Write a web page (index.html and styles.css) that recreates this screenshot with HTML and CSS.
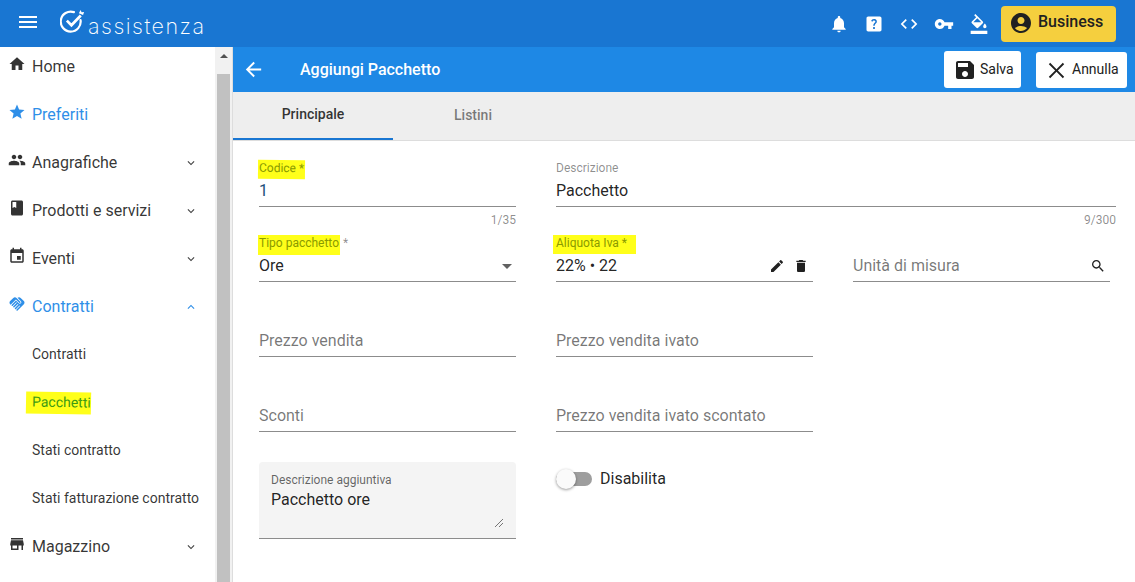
FILE: index.html
```html
<!DOCTYPE html>
<html lang="it">
<head>
<meta charset="utf-8">
<title>Aggiungi Pacchetto</title>
<link rel="stylesheet" href="styles.css">
</head>
<body>
<svg class="sprite" aria-hidden="true">
  <symbol id="i-down" viewBox="0 0 24 24"><path d="M7.41 8.59L12 13.17l4.59-4.58L18 10l-6 6-6-6z"/></symbol>
  <symbol id="i-up" viewBox="0 0 24 24"><path d="M7.41 15.41L12 10.83l4.59 4.58L18 14l-6-6-6 6z"/></symbol>
</svg>
<header class="topbar">
  <button class="menu-btn" aria-label="Menu"><span></span><span></span><span></span></button>
  <div class="logo">
    <svg class="logo-mark" viewBox="0 0 26 24"><path d="M19.8 10.6A9.6 9.6 0 1 1 13.4 3" fill="none" stroke="#fff" stroke-width="2.1" stroke-linecap="round"/><path d="M6.6 11.2l4.4 4.4L20 6.2" fill="none" stroke="#fff" stroke-width="2.6"/><path d="M18.2 4l1.6-3 1 2.2 2.4-.4-1 3z" fill="#fff"/></svg>
    <span class="logo-text">assistenza</span>
  </div>
  <div class="top-actions">
    <svg class="top-icon" viewBox="0 0 24 24"><path d="M12 22c1.1 0 2-.9 2-2h-4c0 1.1.89 2 2 2zm6-6v-5c0-3.07-1.64-5.64-4.5-6.32V4c0-.83-.67-1.5-1.5-1.5s-1.5.67-1.5 1.5v.68C7.63 5.36 6 7.92 6 11v5l-2 2v1h16v-1l-2-2z"/></svg>
    <svg class="top-icon" viewBox="0 0 24 24"><path d="M19 3H5c-1.1 0-2 .9-2 2v14c0 1.1.9 2 2 2h14c1.1 0 2-.9 2-2V5c0-1.1-.9-2-2-2zm-6.99 15c-.7 0-1.26-.56-1.26-1.26 0-.71.56-1.25 1.26-1.25.71 0 1.25.54 1.25 1.25-.01.69-.54 1.26-1.25 1.26zm3.01-7.4c-.76 1.11-1.48 1.46-1.87 2.17-.16.29-.22.48-.22 1.41h-1.82c0-.49-.08-1.29.31-1.98.49-.87 1.42-1.39 1.96-2.16.57-.81.25-2.33-1.37-2.33-1.06 0-1.58.8-1.8 1.48l-1.65-.7C9.01 7.15 10.22 6 11.99 6c1.48 0 2.49.67 3.01 1.52.44.72.7 2.07.03 3.08z"/></svg>
    <svg class="top-icon" viewBox="0 0 24 24"><path d="M9.4 16.6L4.8 12l4.6-4.6L8 6l-6 6 6 6 1.4-1.4zm5.2 0l4.6-4.6-4.6-4.6L16 6l6 6-6 6-1.4-1.4z"/></svg>
    <svg class="top-icon" viewBox="0 0 24 24"><path d="M12.65 10C11.83 7.67 9.61 6 7 6c-3.31 0-6 2.69-6 6s2.69 6 6 6c2.61 0 4.83-1.67 5.65-4H17v4h4v-4h2v-4H12.65zM7 14c-1.1 0-2-.9-2-2s.9-2 2-2 2 .9 2 2-.9 2-2 2z"/></svg>
    <svg class="top-icon" viewBox="0 0 24 24"><path d="M16.56 8.94L7.62 0 6.21 1.41l2.38 2.38-5.15 5.15c-.59.59-.59 1.54 0 2.12l5.5 5.5c.29.29.68.44 1.06.44s.77-.15 1.06-.44l5.5-5.5c.59-.58.59-1.53 0-2.12zM5.21 10L10 5.21 14.79 10H5.21zM19 11.5s-2 2.17-2 3.5c0 1.1.9 2 2 2s2-.9 2-2c0-1.33-2-3.5-2-3.5zM2 20h20v4H2v-4z"/></svg>
    <button class="business">
      <svg class="business-icon" viewBox="0 0 24 24"><path d="M12 2C6.48 2 2 6.48 2 12s4.48 10 10 10 10-4.48 10-10S17.52 2 12 2zm0 4c1.93 0 3.5 1.57 3.5 3.5S13.93 13 12 13s-3.5-1.57-3.5-3.5S10.07 6 12 6zm0 14c-2.03 0-4.43-.82-6.14-2.88C7.55 15.8 9.68 15 12 15s4.45.8 6.14 2.12C16.43 19.18 14.03 20 12 20z"/></svg>
      Business
    </button>
  </div>
</header>
<div class="shell">
  <aside class="sidebar">
    <nav class="nav">
      <a class="nav-row"><svg class="nav-icon" viewBox="0 0 24 24"><path d="M10 20v-6h4v6h5v-8h3L12 3 2 12h3v8z"/></svg>Home</a>
      <a class="nav-row is-active"><svg class="nav-icon" viewBox="0 0 24 24"><path d="M12 17.27L18.18 21l-1.64-7.03L22 9.24l-7.19-.61L12 2 9.19 8.63 2 9.24l5.46 4.73L5.82 21z"/></svg>Preferiti</a>
      <a class="nav-row"><svg class="nav-icon" viewBox="0 0 24 24"><path d="M16 11c1.66 0 2.99-1.34 2.99-3S17.66 5 16 5c-1.66 0-3 1.34-3 3s1.34 3 3 3zm-8 0c1.66 0 2.99-1.34 2.99-3S9.66 5 8 5C6.34 5 5 6.34 5 8s1.34 3 3 3zm0 2c-2.33 0-7 1.17-7 3.5V19h14v-2.5c0-2.33-4.67-3.5-7-3.5zm8 0c-.29 0-.62.02-.97.05 1.16.84 1.97 1.97 1.97 3.45V19h6v-2.5c0-2.33-4.67-3.5-7-3.5z"/></svg>Anagrafiche<svg class="chev"><use href="#i-down"/></svg></a>
      <a class="nav-row"><svg class="nav-icon" viewBox="0 0 24 24"><path d="M18 2H6c-1.1 0-2 .9-2 2v16c0 1.1.9 2 2 2h12c1.1 0 2-.9 2-2V4c0-1.1-.9-2-2-2zM6 4h5v8l-2.5-1.5L6 12V4z"/></svg>Prodotti e servizi<svg class="chev"><use href="#i-down"/></svg></a>
      <a class="nav-row"><svg class="nav-icon" viewBox="0 0 24 24"><path d="M17 12h-5v5h5v-5zM16 1v2H8V1H6v2H5c-1.11 0-1.99.9-1.99 2L3 19c0 1.1.89 2 2 2h14c1.1 0 2-.9 2-2V5c0-1.1-.9-2-2-2h-1V1h-2zm3 18H5V8h14v11z"/></svg>Eventi<svg class="chev"><use href="#i-down"/></svg></a>
      <a class="nav-row is-active"><svg class="nav-icon" viewBox="0 0 24 24"><path d="M16.48 10.41c-.39.39-1.04.39-1.43 0l-4.47-4.46-7.05 7.04-.66-.63c-1.17-1.17-1.17-3.07 0-4.24l4.24-4.24c1.17-1.17 3.07-1.17 4.24 0L16.48 9c.39.39.39 1.02 0 1.41zm.7-2.12c.78.78.78 2.05 0 2.83-1.27 1.27-2.61.22-2.83 0l-3.76-3.76-5.57 5.57c-.39.39-.39 1.02 0 1.41.39.39 1.02.39 1.42 0l4.62-4.62.71.71-4.62 4.62c-.39.39-.39 1.02 0 1.41.39.39 1.02.39 1.42 0l4.62-4.62.71.71-4.62 4.62c-.39.39-.39 1.02 0 1.41.39.39 1.02.39 1.41 0l4.62-4.62.71.71-4.62 4.62c-.39.39-.39 1.02 0 1.41.39.39 1.02.39 1.41 0l8.32-8.34c1.17-1.17 1.17-3.07 0-4.24l-4.24-4.24c-1.15-1.15-3.01-1.17-4.18-.06l4.48 4.47z"/></svg>Contratti<svg class="chev"><use href="#i-up"/></svg></a>
      <a class="nav-row nav-sub">Contratti</a>
      <a class="nav-row nav-sub"><span class="marker marker-nav">Pacchetti</span></a>
      <a class="nav-row nav-sub">Stati contratto</a>
      <a class="nav-row nav-sub">Stati fatturazione contratto</a>
      <a class="nav-row"><svg class="nav-icon" viewBox="0 0 24 24"><path d="M20 4H4v2h16V4zm1 10v-2l-1-5H4l-1 5v2h1v6h10v-6h4v6h2v-6h1zm-9 4H6v-4h6v4z"/></svg>Magazzino<svg class="chev"><use href="#i-down"/></svg></a>
    </nav>
    <div class="scrollbar"><span class="scroll-arrow"></span><span class="scroll-thumb"></span></div>
  </aside>
  <main class="content">
    <div class="toolbar">
      <svg class="back" viewBox="0 0 24 24"><path d="M20 11H7.83l5.59-5.59L12 4l-8 8 8 8 1.41-1.41L7.83 13H20v-2z"/></svg>
      <h1 class="title">Aggiungi Pacchetto</h1>
      <button class="tool-btn btn-save"><svg class="tool-icon" viewBox="0 0 24 24"><path d="M17 3H5c-1.11 0-2 .9-2 2v14c0 1.1.89 2 2 2h14c1.1 0 2-.9 2-2V7l-4-4zm-5 16c-1.66 0-3-1.34-3-3s1.34-3 3-3 3 1.34 3 3-1.34 3-3 3zm3-10H5V5h10v4z"/></svg>Salva</button>
      <button class="tool-btn btn-cancel"><svg class="tool-icon" viewBox="0 0 24 24"><path d="M20 5.4L18.6 4 12 10.6 5.4 4 4 5.4 10.6 12 4 18.6 5.4 20 12 13.4 18.6 20 20 18.6 13.4 12z"/></svg>Annulla</button>
    </div>
    <div class="tabs">
      <div class="tab tab-on">Principale</div>
      <div class="tab">Listini</div>
    </div>
    <form class="form">
      <div class="row">
        <div class="field">
          <div class="label"><span class="marker marker-a">Codice *</span></div>
          <div class="value value-blue">1</div>
          <div class="counter">1/35</div>
        </div>
        <div class="field field-wide">
          <div class="label">Descrizione</div>
          <div class="value">Pacchetto</div>
          <div class="counter">9/300</div>
        </div>
      </div>
      <div class="row">
        <div class="field">
          <div class="label"><span class="marker marker-b">Tipo pacchetto</span> *</div>
          <div class="value">Ore<span class="caret"></span></div>
        </div>
        <div class="field">
          <div class="label"><span class="marker marker-c">Aliquota Iva *</span></div>
          <div class="value">22% • 22
            <span class="value-icons">
              <svg class="mini" viewBox="0 0 24 24"><path d="M3 17.25V21h3.75L17.81 9.94l-3.75-3.75L3 17.25zM20.71 7.04c.39-.39.39-1.02 0-1.41l-2.34-2.34c-.39-.39-1.02-.39-1.41 0l-1.83 1.83 3.75 3.75 1.83-1.83z"/></svg>
              <svg class="mini" viewBox="0 0 24 24"><path d="M6 19c0 1.1.9 2 2 2h8c1.1 0 2-.9 2-2V7H6v12zM19 4h-3.5l-1-1h-5l-1 1H5v2h14V4z"/></svg>
            </span>
          </div>
        </div>
        <div class="field">
          <div class="label"></div>
          <div class="value value-empty">Unità di misura
            <span class="value-icons"><svg class="mini mini-search" viewBox="0 0 24 24"><path d="M15.5 14h-.79l-.28-.27C15.41 12.59 16 11.11 16 9.5 16 5.91 13.09 3 9.5 3S3 5.91 3 9.5 5.91 16 9.5 16c1.61 0 3.09-.59 4.23-1.57l.27.28v.79l5 4.99L20.49 19l-4.99-5zm-6 0C7.01 14 5 11.99 5 9.5S7.01 5 9.5 5 14 7.01 14 9.5 11.99 14 9.5 14z"/></svg></span>
          </div>
        </div>
      </div>
      <div class="row">
        <div class="field"><div class="label"></div><div class="value value-empty">Prezzo vendita</div></div>
        <div class="field"><div class="label"></div><div class="value value-empty">Prezzo vendita ivato</div></div>
      </div>
      <div class="row">
        <div class="field"><div class="label"></div><div class="value value-empty">Sconti</div></div>
        <div class="field"><div class="label"></div><div class="value value-empty">Prezzo vendita ivato scontato</div></div>
      </div>
      <div class="row row-last">
        <div class="textarea">
          <div class="ta-label">Descrizione aggiuntiva</div>
          <div class="ta-value">Pacchetto ore</div>
          <svg class="grip" viewBox="0 0 10 10"><path d="M1 9L9 1M5 9l4-4" fill="none" stroke="#555" stroke-width=".8"/></svg>
        </div>
        <div class="toggle-wrap">
          <span class="toggle"><span class="knob"></span></span>
          <span class="toggle-label">Disabilita</span>
        </div>
      </div>
    </form>
  </main>
</div>
</body>
</html>
```
FILE: styles.css
```css
* { box-sizing: border-box; }
html, body { margin: 0; height: 100%; overflow: hidden; }
body { font-family: Roboto, "Liberation Sans", sans-serif; color: rgba(0,0,0,.87); background: #fff; display: flex; flex-direction: column; width: 1135px; height: 582px; }
button { font-family: inherit; border: 0; cursor: pointer; }
.sprite { display: none; }

.topbar { height: 47px; flex: none; background: #1976d2; display: flex; align-items: center; padding: 0 19px 0 19px; }
.menu-btn { width: 18px; height: 12px; margin-bottom: 3px; padding: 0; background: none; display: flex; flex-direction: column; justify-content: space-between; }
.menu-btn span { display: block; height: 2px; background: #fff; }
.logo { display: flex; align-items: center; margin-left: 23px; margin-top: -1px; }
.logo-mark { width: 27px; height: 25px; margin-bottom: 3px; }
.logo-text { font-family: Inter, sans-serif; font-weight: 200; font-size: 21.5px; color: #fff; letter-spacing: 1.5px; margin-left: 1px; margin-top: 5px; }
.top-actions { margin-left: auto; display: flex; align-items: center; }
.top-icon { width: 20px; height: 20px; fill: #fff; margin-right: 15px; }
.business { margin-left: -3px; width: 115px; height: 36px; background: #f5cf3e; border-radius: 4px; display: flex; align-items: center; font-size: 16px; font-weight: 500; color: #212121; padding: 0 0 5px 8px; gap: 5px; }
.business-icon { width: 24px; height: 24px; fill: #212121; margin-top: 3px; }

.shell { flex: 1; display: flex; min-height: 0; }
.sidebar { width: 233px; flex: none; display: flex; overflow: hidden; border-right: 1px solid #ddd; }
.nav { flex: 1; margin-top: -5px; min-width: 0; }
.nav-row { height: 48px; display: flex; align-items: center; font-size: 16px; color: rgba(0,0,0,.8); padding-left: 8px; }
.nav-icon { width: 18px; height: 18px; fill: #333; margin-right: 6px; margin-top: -4px; flex: none; }
.nav-row.is-active { color: #2f8fe8; }
.is-active .nav-icon, .is-active .chev { fill: #2f8fe8; }
.chev { width: 14px; height: 14px; margin-left: auto; margin-right: 17px; margin-top: 2px; fill: #444; flex: none; }
.nav-sub { font-size: 14px; padding-left: 32px; }
.scrollbar { width: 17px; flex: none; background: #f1f1f1; display: flex; flex-direction: column; align-items: center; }
.scroll-arrow { margin-top: 7px; border: 4px solid transparent; border-top: 0; border-bottom: 4px solid #505050; }
.scroll-thumb { width: 13px; flex: 1; margin-top: 16px; background: #c1c1c1; }

.content { flex: 1; min-width: 0; display: flex; flex-direction: column; }
.toolbar { height: 45px; flex: none; background: #1e88e5; display: flex; align-items: center; padding: 0 8px 0 9px; }
.back { width: 23px; height: 23px; fill: #fff; }
.title { margin: 0 0 0 35px; font-size: 16px; font-weight: 500; color: #fff; }
.tool-btn { height: 37px; background: #fff; border-radius: 3px; display: flex; align-items: center; font-size: 14px; color: #212121; padding: 0; }
.tool-icon { fill: #212121; flex: none; }
.btn-save { width: 77px; margin-left: auto; padding-left: 9px; gap: 3px; padding-bottom: 2px; }
.btn-save .tool-icon { width: 24px; height: 24px; margin-top: 2px; }
.btn-cancel { width: 91px; height: 36px; margin-left: 15px; margin-top: 1px; padding-left: 9px; gap: 4px; padding-bottom: 2px; }
.btn-cancel .tool-icon { width: 23px; height: 23px; margin-top: 2px; }

.tabs { height: 49px; flex: none; background: #eee; display: flex; border-bottom: 1px solid #ddd; }
.tab { width: 160px; height: 48px; display: flex; align-items: center; justify-content: center; font-size: 14px; font-weight: 500; color: rgba(0,0,0,.5); padding-bottom: 2px; }
.tab-on { color: rgba(0,0,0,.8); border-bottom: 2px solid #1976d2; }

.form { flex: 1; padding: 17px 19px 0 26px; }
.row { display: flex; gap: 40px; height: 75px; }
.field { width: 257px; height: 49px; position: relative; display: flex; flex-direction: column; border-bottom: 1px solid #8c8c8c; }
.field-wide { width: 560px; }
.label { height: 22px; font-size: 12px; line-height: 20px; color: rgba(0,0,0,.45); white-space: nowrap; }
.value { font-size: 16px; line-height: 22px; display: flex; align-items: center; color: rgba(0,0,0,.87); }
.value-blue { color: #1d4f78; }
.value-empty { color: rgba(0,0,0,.54); }
.value-icons { margin-left: auto; display: flex; align-items: center; gap: 8px; margin-right: 4px; }
.mini { width: 16px; height: 16px; fill: #212121; }
.mini-search { width: 16px; height: 16px; margin-right: 0; }
.caret { margin-left: auto; margin-right: 4px; border: 5px solid transparent; border-top: 5px solid #616161; border-bottom: 0; }
.counter { position: absolute; right: 0; top: 54px; font-size: 12px; line-height: 16px; color: rgba(0,0,0,.45); }

.marker { background: #ffff1a; color: #8a9a00; }
.marker-a { display: inline-block; margin-left: -1px; padding: 0 1px 2px 1px; line-height: 17px; transform: rotate(.5deg); }
.marker-b { display: inline-block; margin-left: -1px; padding: 0 1px 3px 1px; line-height: 17px; }
.marker-c { display: inline-block; margin-left: -3px; padding: 0 9px 2px 3px; line-height: 17px; }
.marker-nav { display: inline-block; color: #3c9a14; padding: 2px 0 3px 6px; margin-left: -6px; margin-top: 2px; line-height: 17px; transform: rotate(1deg); }

.row-last { margin-top: 4px; height: 77px; }
.textarea { width: 257px; height: 77px; background: #f4f4f4; border-bottom: 1px solid #8c8c8c; border-radius: 4px 4px 0 0; padding: 10px 12px 0; position: relative; }
.ta-label { font-size: 12px; line-height: 16px; color: rgba(0,0,0,.6); }
.ta-value { font-size: 16px; line-height: 22px; padding-top: 1px; }
.grip { position: absolute; right: 12px; bottom: 10px; width: 10px; height: 10px; }
.toggle-wrap { display: flex; align-items: flex-start; height: 34px; }
.toggle { width: 36px; height: 14px; margin-top: 10px; background: #9e9e9e; border-radius: 7px; position: relative; display: block; }
.knob { position: absolute; left: 0; top: -3px; width: 20px; height: 20px; border-radius: 50%; background: #fafafa; box-shadow: 0 1px 3px rgba(0,0,0,.4); }
.toggle-label { font-size: 16px; line-height: 22px; margin-left: 8px; margin-top: 6px; }
```
